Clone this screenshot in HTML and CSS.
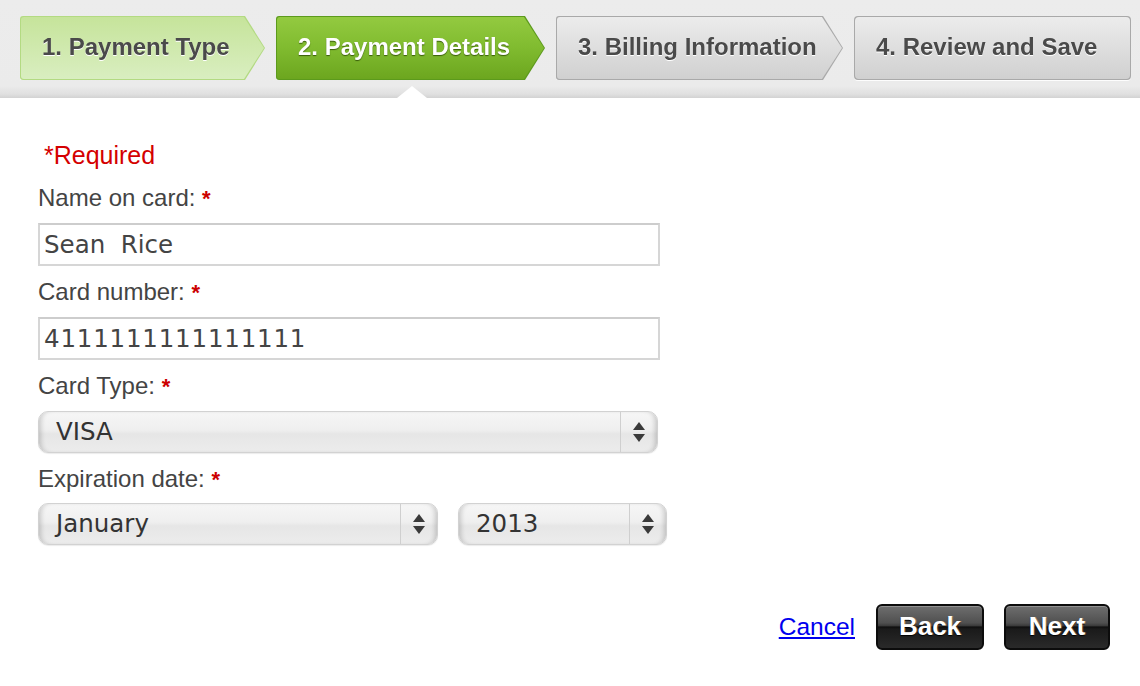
FILE: index.html
```html
<!DOCTYPE html>
<html>
<head>
<meta charset="utf-8">
<link rel="stylesheet" href="styles.css">
</head>
<body>
<div class="header">
  <div class="steps">
    <div class="step step-done arrow s1"><div class="step-in">1. Payment Type</div></div>
    <div class="step step-current arrow s2"><div class="step-in">2. Payment Details</div></div>
    <div class="step step-todo arrow s3"><div class="step-in">3. Billing Information</div></div>
    <div class="step step-todo s4"><div class="step-in">4. Review and Save</div></div>
  </div>
  <div class="notch"></div>
</div>

<div class="form">
  <div class="required">*Required</div>

  <div class="label">Name on card: <span class="req">*</span></div>
  <div class="input">Sean&nbsp;&nbsp;Rice</div>

  <div class="label">Card number: <span class="req">*</span></div>
  <div class="input input-num">4111111111111111</div>

  <div class="label">Card Type: <span class="req">*</span></div>
  <div class="select sel-type">
    <span class="sel-text">VISA</span>
    <span class="sel-arrows"><i class="up"></i><i class="down"></i></span>
  </div>

  <div class="label">Expiration date: <span class="req">*</span></div>
  <div class="row">
    <div class="select sel-month">
      <span class="sel-text">January</span>
      <span class="sel-arrows"><i class="up"></i><i class="down"></i></span>
    </div>
    <div class="select sel-year">
      <span class="sel-text">2013</span>
      <span class="sel-arrows"><i class="up"></i><i class="down"></i></span>
    </div>
  </div>
</div>

<div class="actions">
  <a class="cancel" href="#">Cancel</a>
  <div class="btn btn-back">Back</div>
  <div class="btn btn-next">Next</div>
</div>
</body>
</html>
```

FILE: styles.css
```css
html, body {
  margin: 0;
  padding: 0;
  background: #ffffff;
  width: 1140px;
  height: 686px;
  overflow: hidden;
}

body {
  font-family: "Liberation Sans", Arial, sans-serif;
  color: #444;
}

/* ---------- header with steps ---------- */
.header {
  position: relative;
  height: 98px;
  background: linear-gradient(to bottom, #ececec 0px, #ebebeb 86px, #e0e0e0 94px, #d2d2d2 98px);
  box-sizing: border-box;
  padding: 16px 0 0 20px;
}

.steps {
  display: flex;
  gap: 11px;
  height: 64px;
}

.step {
  height: 64px;
  box-sizing: border-box;
  padding: 1px;
  filter: drop-shadow(0 1px 0 rgba(255,255,255,0.9));
}

.step.arrow,
.step.arrow .step-in {
  clip-path: polygon(0 0, calc(100% - 20px) 0, 100% 50%, calc(100% - 20px) 100%, 0 100%);
  border-radius: 3px 0 0 3px;
}

.s4, .s4 .step-in { border-radius: 4px; }

.s1 { width: 245px; }
.s2 { width: 269px; }
.s3 { width: 287px; }
.s4 { width: 277px; }

.step-in {
  height: 62px;
  box-sizing: border-box;
  padding-left: 21px;
  padding-bottom: 3px;
  display: flex;
  align-items: center;
  font-weight: bold;
  font-size: 24px;
  white-space: nowrap;
}

.step-done { background: #b3da82; }
.step-done .step-in {
  background: linear-gradient(to bottom, #c6e49b, #d9eec0);
  color: #4a4a4a;
  text-shadow: 0 1px 0 #ffffff;
}

.step-current { background: #5c9a1c; }
.step-current .step-in {
  background: linear-gradient(to bottom, #93ca40 0%, #80bb2f 50%, #6ca61f 100%);
  color: #ffffff;
  text-shadow: 0 1px 1px rgba(40, 70, 0, 0.8);
}

.step-todo { background: #a9a9a9; }
.step-todo .step-in {
  background: linear-gradient(to bottom, #ececec, #d0d0d0);
  color: #4a4a4a;
  text-shadow: 0 1px 0 #ffffff;
}

.notch {
  position: absolute;
  left: 397px;
  bottom: 0;
  width: 30px;
  height: 12px;
  background: #ffffff;
  clip-path: polygon(50% 0, 100% 100%, 0 100%);
  filter: drop-shadow(0 0 2px rgba(0,0,0,0.2));
}

/* ---------- form ---------- */
.form {
  padding: 43px 0 0 38px;
  width: 630px;
}

.required {
  color: #d40000;
  font-size: 25px;
  line-height: 28px;
  padding-left: 6px;
  margin-bottom: 15px;
}

.label {
  font-size: 24px;
  line-height: 28px;
  color: #444;
  margin-bottom: 10px;
}

.req {
  color: #cc0000;
  font-weight: bold;
  font-size: 22px;
}

.input {
  width: 622px;
  height: 43px;
  box-sizing: border-box;
  border: 2px solid #d6d6d6;
  border-top-color: #cdcdcd;
  background: #fff;
  font-family: "DejaVu Sans", "Lucida Grande", sans-serif;
  font-size: 24.5px;
  line-height: 39px;
  padding-left: 4px;
  color: #444;
  margin-bottom: 12px;
}

.input-num { letter-spacing: 0.8px; }

.select {
  display: flex;
  align-items: stretch;
  height: 42px;
  box-sizing: border-box;
  border: 1px solid #d2d2d2;
  border-radius: 10px;
  background: linear-gradient(to bottom, #f6f6f6 0%, #efefef 45%, #e6e6e6 55%, #ececec 100%);
  box-shadow: inset 5px 0 5px -3px rgba(0,0,0,0.18), inset -5px 0 5px -3px rgba(0,0,0,0.18), 0 1px 1px rgba(0,0,0,0.08);
  font-family: "DejaVu Sans", "Lucida Grande", sans-serif;
  font-size: 24.5px;
  color: #333;
  margin-bottom: 12px;
}

.sel-text {
  flex: 1;
  padding-left: 17px;
  line-height: 40px;
}

.sel-arrows {
  width: 36px;
  border-left: 1px solid #cfcfcf;
  display: flex;
  flex-direction: column;
  align-items: center;
  justify-content: center;
  gap: 4px;
}

.sel-arrows i {
  display: block;
  width: 0;
  height: 0;
  border-left: 6px solid transparent;
  border-right: 6px solid transparent;
}

.sel-arrows .up { border-bottom: 8px solid #3a3a3a; }
.sel-arrows .down { border-top: 8px solid #3a3a3a; }

.sel-type { width: 620px; }
.sel-month { width: 400px; }
.sel-year { width: 209px; }

.row {
  display: flex;
  gap: 20px;
  margin-top: -1px;
}

/* ---------- actions ---------- */
.actions {
  display: flex;
  align-items: center;
  justify-content: flex-end;
  padding-right: 30px;
  margin-top: 47px;
}

.cancel {
  color: #0000ee;
  font-size: 24.5px;
  text-decoration: underline;
  margin-right: 21px;
  margin-top: 0;
}

.btn {
  height: 46px;
  box-sizing: border-box;
  border: 2px solid #0c0c0c;
  border-radius: 6px;
  background: linear-gradient(to bottom, #6e6e6e 0%, #505050 40%, #3a3a3a 47%, #0e0e0e 50%, #1a1a1a 55%, #2a2a2a 100%);
  box-shadow: inset 0 1px 0 rgba(255,255,255,0.25);
  color: #fff;
  font-weight: bold;
  font-size: 26px;
  display: flex;
  align-items: center;
  justify-content: center;
  padding-bottom: 2px;
  text-shadow: 0 1px 1px #000, 1px 0 0 rgba(255,210,150,0.35);
}

.btn-back { width: 108px; margin-right: 20px; }
.btn-next { width: 106px; }
```
